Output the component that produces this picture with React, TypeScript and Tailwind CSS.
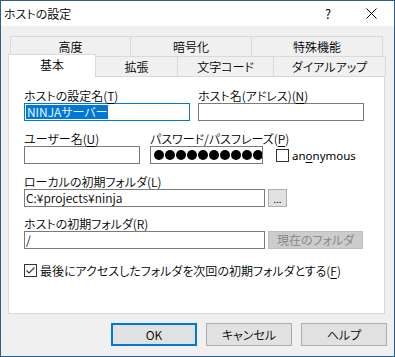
const font = "font-['Noto_Sans_CJK_JP','Noto_Sans',sans-serif] [font-feature-settings:'palt'] font-[350]";

function U({ children }: { children: React.ReactNode }) {
  return <span className="underline underline-offset-[2px]">{children}</span>;
}

function Label({ children }: { children: React.ReactNode }) {
  return <div className="h-[15px] leading-[15px] whitespace-nowrap">{children}</div>;
}

function Input({ w, children, focused }: { w: string; children?: React.ReactNode; focused?: boolean }) {
  return (
    <div
      className={`${w} h-[18px] border ${focused ? "border-[#0078d7]" : "border-[#7a7a7a]"} bg-white flex items-center pl-[1px] overflow-hidden whitespace-nowrap leading-[14px]`}
    >
      {children}
    </div>
  );
}

function Checkbox({ checked }: { checked?: boolean }) {
  return (
    <div className="w-[13px] h-[13px] border border-[#333333] bg-white flex items-center justify-center shrink-0">
      {checked && (
        <svg width="11" height="11" viewBox="0 0 11 11">
          <path d="M1.5 5.5 L4 8 L9.5 2.5" fill="none" stroke="#333333" strokeWidth="1.2" />
        </svg>
      )}
    </div>
  );
}

export default function App() {
  const topTabs = [
    { label: "高度", w: "w-[121px]" },
    { label: "暗号化", w: "w-[122px]" },
    { label: "特殊機能", w: "w-[132px]" },
  ];
  const bottomTabs = [
    { label: "拡張", w: "w-[83px]" },
    { label: "文字コード", w: "w-[97px]" },
    { label: "ダイアルアップ", w: "w-[113px]" },
  ];

  return (
    <div className={`w-[395px] h-[357px] border border-[#2d5e8e] bg-[#f0f0f0] text-[12px] text-black flex flex-col ${font}`}>
      {/* title bar */}
      <div className="h-[25px] bg-white flex items-center pl-[3px] shrink-0">
        <span className="leading-[15px]">ホストの設定</span>
        <span className="ml-auto text-[13px] leading-[15px]">?</span>
        <svg className="ml-[35px] mr-[17px]" width="11" height="11" viewBox="0 0 11 11">
          <path d="M0.5 0.5 L10.5 10.5 M10.5 0.5 L0.5 10.5" stroke="#000" strokeWidth="1" />
        </svg>
      </div>

      {/* tabs */}
      <div className="mt-[10px] ml-[9px] flex h-[21px]">
        {topTabs.map((t, i) => (
          <div
            key={t.label}
            className={`${t.w} h-[21px] border border-[#d9d9d9] bg-[#f0f0f0] flex items-center justify-center ${i > 0 ? "-ml-px" : ""}`}
          >
            {t.label}
          </div>
        ))}
      </div>
      <div className="-mt-[3px] ml-[7px] flex items-start h-[22px] relative">
        <div className="w-[88px] h-[23px] bg-white border-l border-t border-r border-[#d9d9d9] flex items-center justify-center relative z-10 pb-[2px]">
          基本
        </div>
        {bottomTabs.map(t => (
          <div
            key={t.label}
            className={`${t.w} h-[20px] mt-[2px] -ml-px border-l border-t border-r border-[#d9d9d9] bg-[#f0f0f0] flex items-center justify-center`}
          >
            {t.label}
          </div>
        ))}
      </div>

      {/* panel */}
      <div className="ml-[7px] w-[377px] h-[238px] border border-[#d9d9d9] bg-white pt-[11px] pl-[15px] shrink-0">
        <div className="flex">
          <div className="w-[174px]">
            <Label>
              ホストの設定名(<U>T</U>)
            </Label>
            <Input w="w-[166px]" focused>
              <span className="bg-[#0078d7] text-white px-[1px]">NINJAサーバー</span>
            </Input>
          </div>
          <div>
            <Label>
              ホスト名(アドレス)(<U>N</U>)
            </Label>
            <Input w="w-[166px]" />
          </div>
        </div>

        <div className="flex mt-[10px]">
          <div className="w-[126px]">
            <Label>
              ユーザー名(<U>U</U>)
            </Label>
            <Input w="w-[116px]" />
          </div>
          <div>
            <Label>
              パスワード/パスフレーズ(<U>P</U>)
            </Label>
            <div className="flex items-center">
              <div className="w-[113px] h-[18px] border border-[#7a7a7a] bg-white flex items-center gap-[1px] pl-[3px] overflow-hidden">
                {Array.from({ length: 10 }).map((_, i) => (
                  <div key={i} className="w-[10px] h-[10px] rounded-full bg-black shrink-0" />
                ))}
              </div>
              <div className="ml-[13px]">
                <Checkbox />
              </div>
              <span className="ml-[3px] leading-[15px] font-['Noto_Sans',sans-serif] text-[11.5px] font-normal">
                an<U>o</U>nymous
              </span>
            </div>
          </div>
        </div>

        <div className="mt-[10px]">
          <Label>
            ローカルの初期フォルダ(<U>L</U>)
          </Label>
          <div className="flex">
            <Input w="w-[241px]">C:¥projects¥ninja</Input>
            <div className="ml-[3px] w-[19px] h-[18px] border border-[#adadad] bg-[#e1e1e1] flex items-end justify-center text-[10px] leading-[14px]">
              ...
            </div>
          </div>
        </div>

        <div className="mt-[9px]">
          <Label>
            ホストの初期フォルダ(<U>R</U>)
          </Label>
          <div className="flex">
            <Input w="w-[241px]">/</Input>
            <div className="ml-[3px] w-[95px] h-[18px] border border-[#bfbfbf] bg-[#cccccc] text-[#838383] flex items-center justify-center leading-[14px]">
              現在のフォルダ
            </div>
          </div>
        </div>

        <div className="mt-[14px] flex items-center gap-[3px]">
          <Checkbox checked />
          <span className="leading-[15px] whitespace-nowrap">
            最後にアクセスしたフォルダを次回の初期フォルダとする(<U>F</U>)
          </span>
        </div>
      </div>

      {/* buttons */}
      <div className="mt-[9px] flex justify-end gap-[9px] pr-[7px]">
        <div className="w-[86px] h-[23px] border-2 border-[#0078d7] bg-[#e1e1e1] flex items-center justify-center">OK</div>
        <div className="w-[86px] h-[23px] border border-[#adadad] bg-[#e1e1e1] flex items-center justify-center">キャンセル</div>
        <div className="w-[86px] h-[23px] border border-[#adadad] bg-[#e1e1e1] flex items-center justify-center">ヘルプ</div>
      </div>
    </div>
  );
}
